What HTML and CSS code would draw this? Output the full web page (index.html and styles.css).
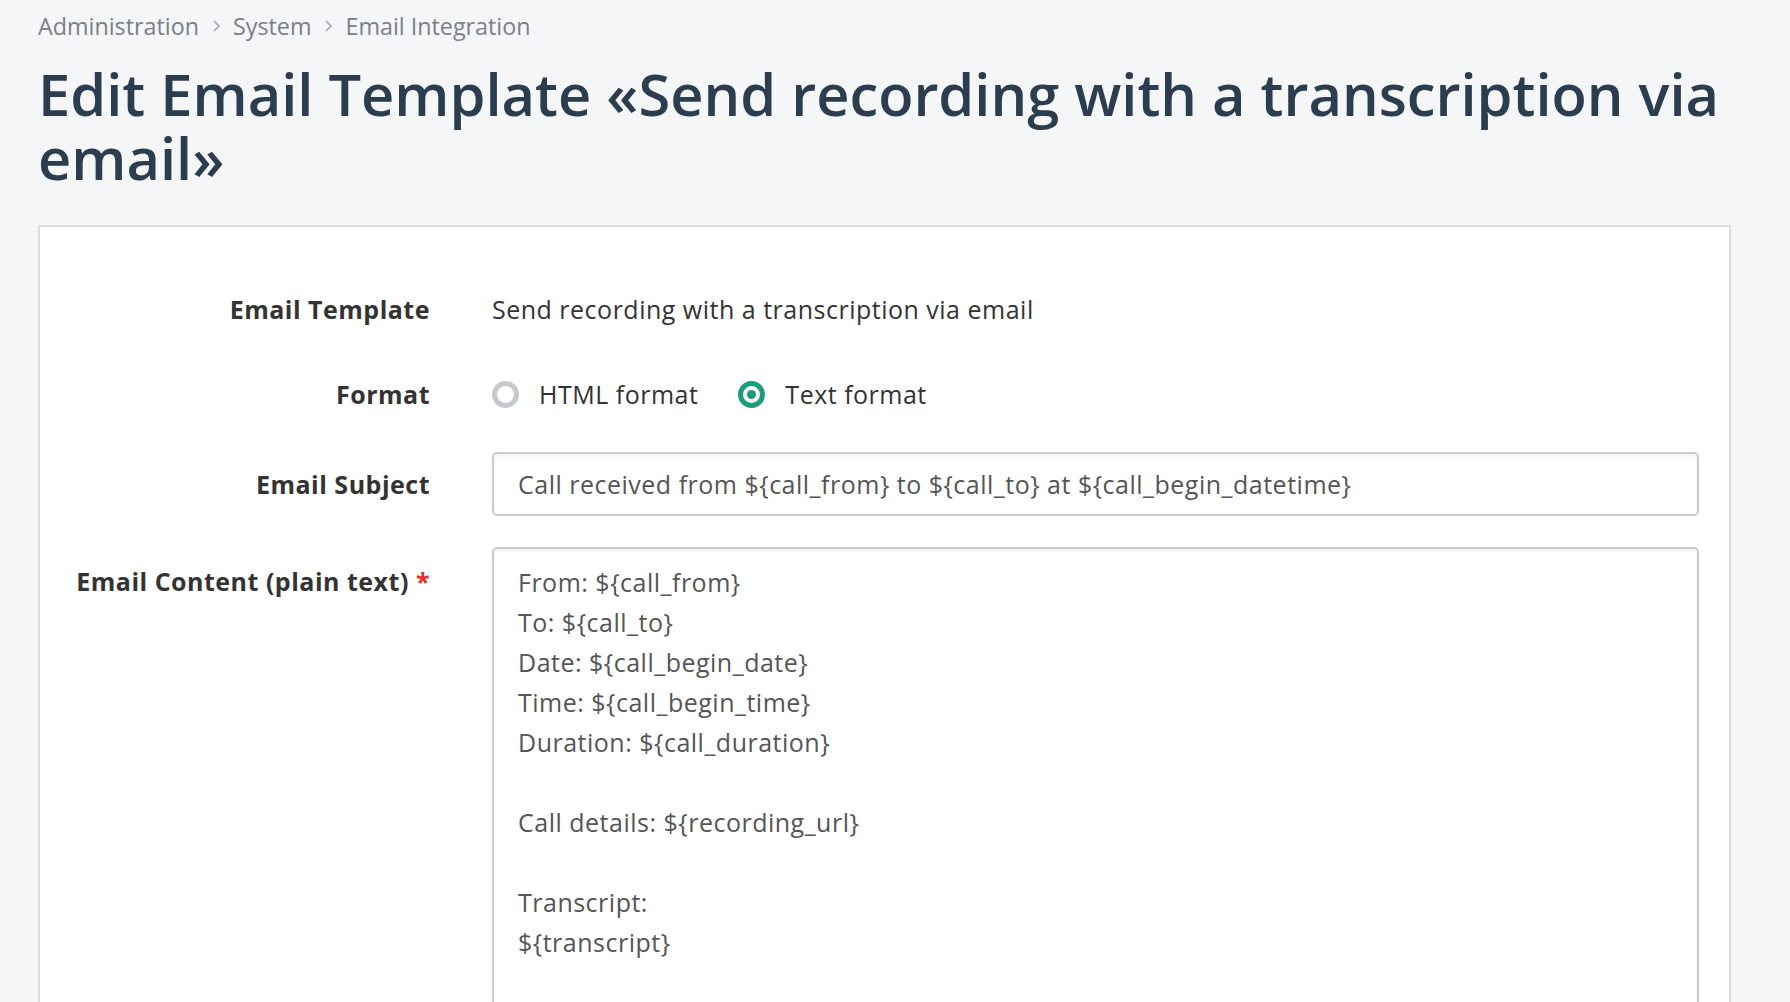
FILE: index.html
```html
<!DOCTYPE html>
<html lang="en">
<head>
<meta charset="utf-8">
<title>Edit Email Template</title>
<link rel="stylesheet" href="styles.css">
</head>
<body>
<div class="page">
  <nav class="crumbs">
    <a class="crumb">Administration</a>
    <svg class="chev" width="9" height="14" viewBox="0 0 9 14"><path d="M2 2 L7 7 L2 12" fill="none" stroke="#a3a8ae" stroke-width="1.6"/></svg>
    <a class="crumb">System</a>
    <svg class="chev" width="9" height="14" viewBox="0 0 9 14"><path d="M2 2 L7 7 L2 12" fill="none" stroke="#a3a8ae" stroke-width="1.6"/></svg>
    <a class="crumb">Email Integration</a>
  </nav>
  <h1 class="title">Edit Email Template «Send recording with a transcription via email»</h1>

  <div class="card">
    <div class="row row-template">
      <div class="label">Email Template</div>
      <div class="value">Send recording with a transcription via email</div>
    </div>
    <div class="row row-format">
      <div class="label">Format</div>
      <div class="value radios">
        <label class="radio"><span class="dot"></span><span class="rtext">HTML format</span></label>
        <label class="radio checked"><span class="dot"></span><span class="rtext">Text format</span></label>
      </div>
    </div>
    <div class="row row-subject">
      <div class="label">Email Subject</div>
      <input class="field" type="text" value="Call received from ${call_from} to ${call_to} at ${call_begin_datetime}">
    </div>
    <div class="row row-content">
      <div class="label label-top">Email Content (plain text) <span class="req">*</span></div>
      <textarea class="field area">From: ${call_from}
To: ${call_to}
Date: ${call_begin_date}
Time: ${call_begin_time}
Duration: ${call_duration}

Call details: ${recording_url}

Transcript:
${transcript}</textarea>
    </div>
  </div>
</div>
</body>
</html>
```
FILE: styles.css
```css
html, body {
  margin: 0;
  padding: 0;
  background: #f5f6f8;
}
body {
  font-family: "Open Sans", "Liberation Sans", sans-serif;
  color: #333;
}
.page {
  margin-left: 38px;
  width: 1693px;
  padding-top: 10px;
}
.crumbs {
  display: flex;
  align-items: center;
  font-size: 23.3px;
  line-height: 32px;
  color: #7b8088;
  height: 32px;
}
.crumb {
  color: #7b8088;
}
.chev {
  margin: 0 12px 0 13px;
}
.title {
  margin: 20px 0 0 0;
  font-size: 57.8px;
  line-height: 64px;
  font-weight: 600;
  color: #2c3d50;
  letter-spacing: 0;
}
.card {
  margin-top: 35px;
  background: #fff;
  border: 2px solid #dcdcdc;
  padding: 66px 30px 300px 0;
}
.row {
  display: grid;
  grid-template-columns: 390px 1207px;
  column-gap: 62px;
  align-items: center;
  font-size: 25px;
  line-height: 32px;
  letter-spacing: 0.5px;
}
.row-template { margin-bottom: 53px; }
.row-format { margin-bottom: 42px; }
.row-subject { margin-bottom: 31px; }
.row-content { align-items: start; }
.label {
  text-align: right;
  font-weight: 700;
  color: #333;
}
.label-top { padding-top: 18px; }
.req { color: #e5302b; }
.value { color: #333; }
.radios {
  display: flex;
  align-items: center;
  gap: 40px;
}
.radio {
  display: flex;
  align-items: center;
  gap: 20px;
}
.dot {
  box-sizing: border-box;
  width: 27px;
  height: 27px;
  border-radius: 50%;
  border: 5px solid #c5c9ce;
  background: #fff;
  position: relative;
}
.radio.checked .dot {
  border-color: #1a9c7e;
}
.radio.checked .dot::after {
  content: "";
  position: absolute;
  left: 50%;
  top: 50%;
  width: 9px;
  height: 9px;
  margin: -4.5px 0 0 -4.5px;
  border-radius: 50%;
  background: #1a9c7e;
}
.rtext { color: #333; }
.field {
  box-sizing: border-box;
  width: 1207px;
  margin: 0;
  border: 2px solid #cbcbcb;
  border-radius: 5px;
  box-shadow: inset 0 2px 3px rgba(0, 0, 0, 0.06);
  background: #fff;
  font-family: "Open Sans", "Liberation Sans", sans-serif;
  font-size: 25px;
  letter-spacing: 0.5px;
  color: #555;
  outline: none;
}
input.field {
  height: 64px;
  padding: 0 24px;
  line-height: 32px;
}
.area {
  display: block;
  height: 560px;
  padding: 13px 24px;
  line-height: 40px;
  resize: none;
  overflow: hidden;
}
```
